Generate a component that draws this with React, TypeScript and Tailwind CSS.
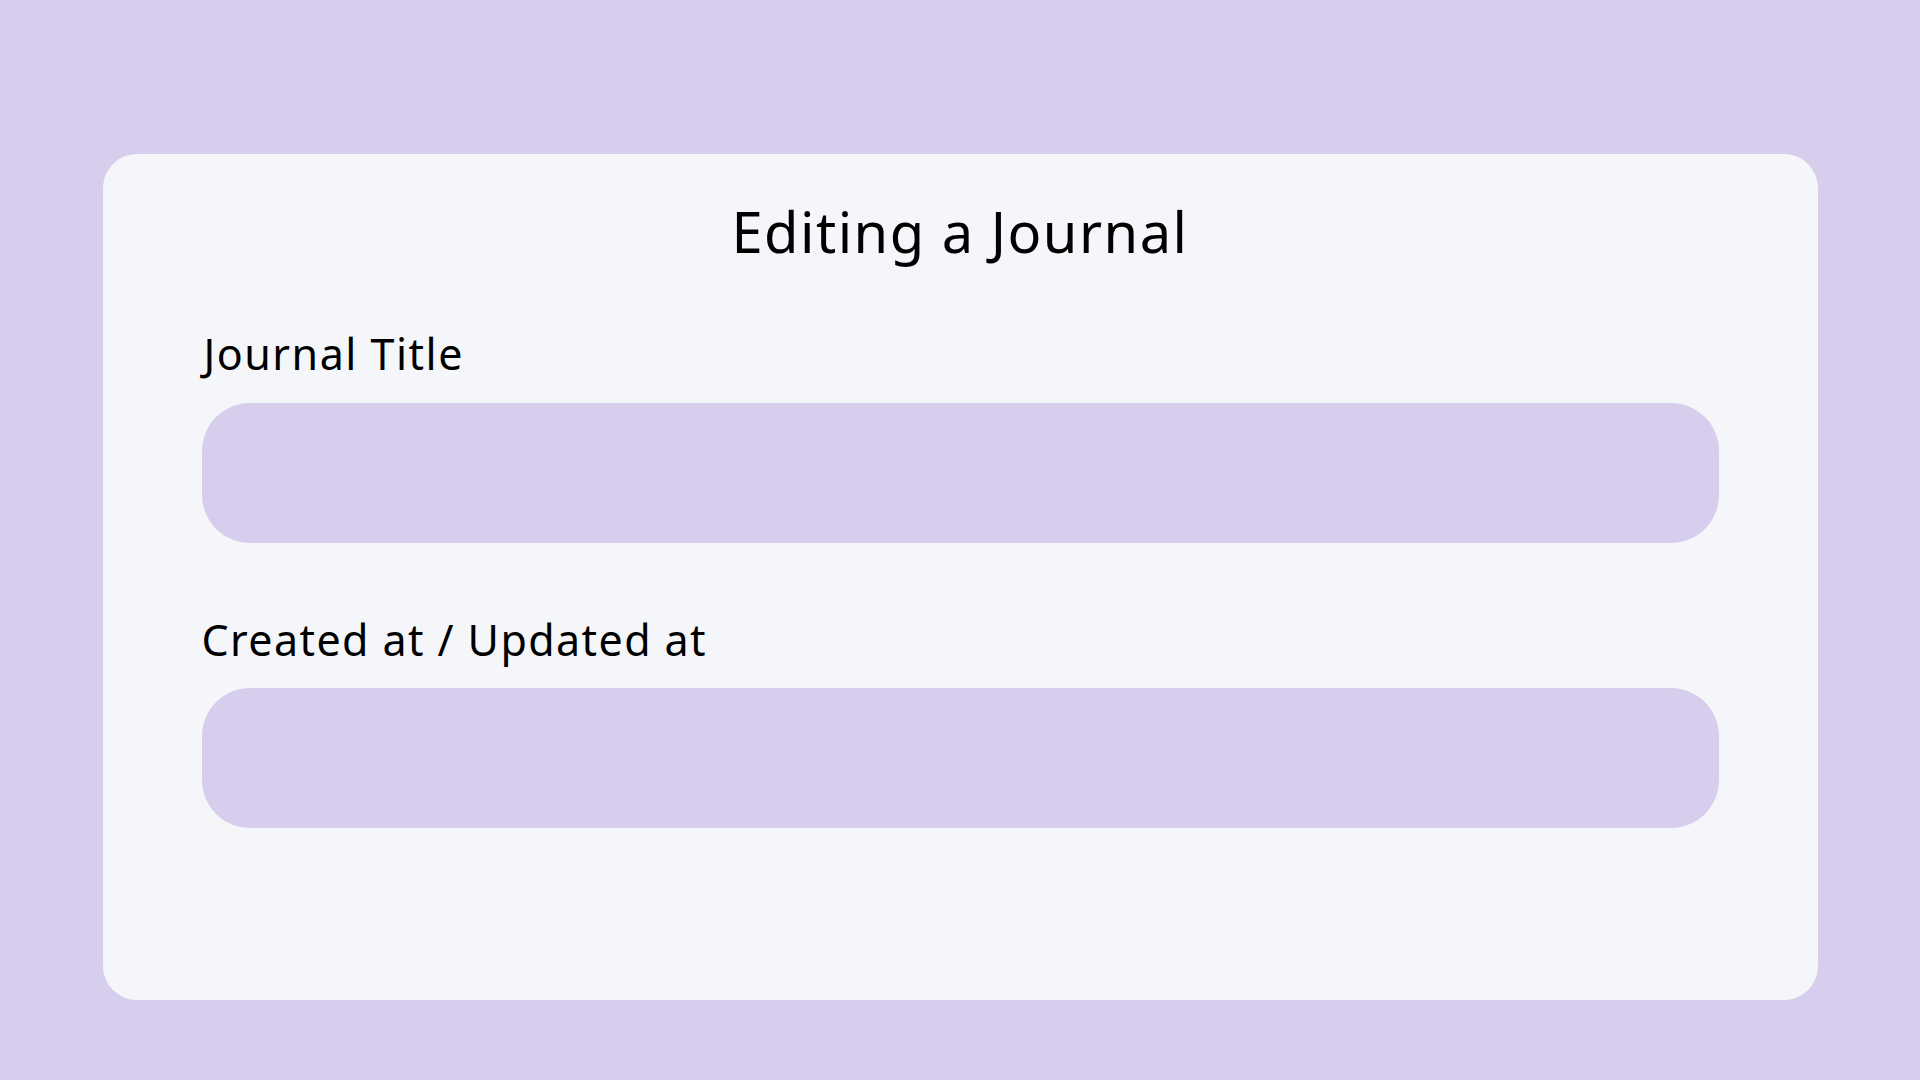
export default function App() {
  return (
    <div className="min-h-screen w-full bg-[#d7cdec] pt-[154px] font-['Noto_Sans',sans-serif] text-black">
      <div className="mx-auto h-[846px] w-[1715px] rounded-[34px] bg-[#f5f6fa] px-[99px] pt-[49px]">
        <h1 className="text-center text-[56px] font-normal leading-none tracking-[1.5px]">Editing a Journal</h1>

        <form className="mt-[73px] flex flex-col">
          <label className="pl-[2px] text-[43px] leading-none tracking-[1.5px]">Journal Title</label>
          <input
            type="text"
            className="mt-[28px] h-[140px] w-full rounded-[48px] bg-[#d7cdec] px-10 text-[32px] outline-none"
          />

          <label className="mt-[75px] text-[43px] leading-none tracking-[1.4px]">Created at / Updated at</label>
          <input
            type="text"
            className="mt-[27px] h-[140px] w-full rounded-[48px] bg-[#d7cdec] px-10 text-[32px] outline-none"
          />
        </form>
      </div>
    </div>
  )
}
